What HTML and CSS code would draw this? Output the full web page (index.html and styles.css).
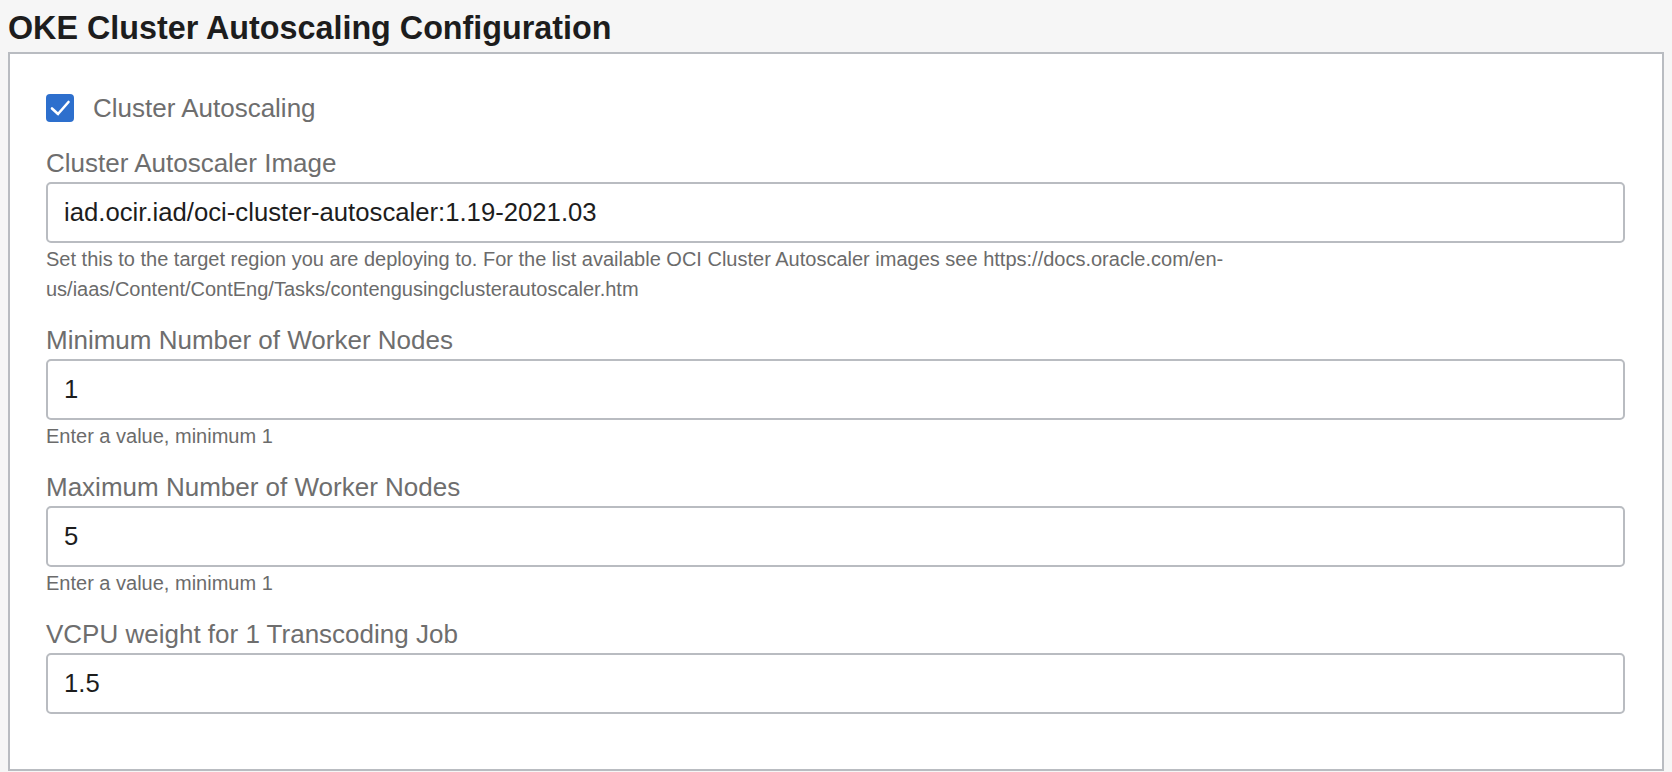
FILE: index.html
```html
<!DOCTYPE html>
<html>
<head>
    <meta charset="UTF-8">
    <title>OKE Cluster Autoscaling Configuration</title>
    <link rel="stylesheet" href="styles.css">
</head>
<body>
    <!-- Section title -->
    <h1 class="section-title">OKE Cluster Autoscaling Configuration</h1>

    <!-- Settings panel -->
    <div class="panel">
        <label class="check-row">
            <span class="check-box">
                <svg width="24" height="24" viewBox="0 0 24 24">
                    <path d="M4 12.5 L10 18 L20.5 6" fill="none" stroke="#fff" stroke-width="2.6" stroke-linecap="round" stroke-linejoin="round"/>
                </svg>
            </span>
            <span class="check-label">Cluster Autoscaling</span>
        </label>

        <div class="field">
            <label class="field-label" for="autoscaler-image">Cluster Autoscaler Image</label>
            <input class="field-input" type="text" id="autoscaler-image" value="iad.ocir.iad/oci-cluster-autoscaler:1.19-2021.03">
            <div class="field-help">Set this to the target region you are deploying to. For the list available OCI Cluster Autoscaler images see https://docs.oracle.com/en-us/iaas/Content/ContEng/Tasks/contengusingclusterautoscaler.htm</div>
        </div>

        <div class="field">
            <label class="field-label" for="min-nodes">Minimum Number of Worker Nodes</label>
            <input class="field-input" type="text" id="min-nodes" value="1">
            <div class="field-help">Enter a value, minimum 1</div>
        </div>

        <div class="field">
            <label class="field-label" for="max-nodes">Maximum Number of Worker Nodes</label>
            <input class="field-input" type="text" id="max-nodes" value="5">
            <div class="field-help">Enter a value, minimum 1</div>
        </div>

        <div class="field">
            <label class="field-label" for="vcpu-weight">VCPU weight for 1 Transcoding Job</label>
            <input class="field-input" type="text" id="vcpu-weight" value="1.5">
        </div>
    </div>
</body>
</html>
```

FILE: styles.css
```css
/* General Styling */
body {
    font-family: 'Liberation Sans', Arial, sans-serif;
    margin: 8px;
    background-color: #f6f6f6;
    color: #1d1d1d;
}

/* Section title */
.section-title {
    margin: 0 0 4px 0;
    font-size: 32.3px;
    line-height: 40px;
    font-weight: bold;
    color: #1d1d1d;
}

/* Panel */
.panel {
    background-color: #fff;
    border: 2px solid #b9bcc1;
    padding: 39px 37px 34px 36px;
}

/* Checkbox row */
.check-row {
    display: flex;
    align-items: center;
    gap: 19px;
    height: 30px;
    margin-bottom: 25px;
}

.check-box {
    width: 28px;
    height: 28px;
    border-radius: 4px;
    background-color: #2d6fcd;
    display: flex;
    align-items: center;
    justify-content: center;
}

.check-label {
    font-size: 26px;
    color: #6e6e6e;
}

/* Form fields */
.field {
    margin-bottom: 21px;
}

.field-label {
    display: block;
    font-size: 26px;
    line-height: 30px;
    color: #6e6e6e;
    margin-bottom: 4px;
}

.field-input {
    display: block;
    width: 100%;
    height: 61px;
    box-sizing: border-box;
    border: 2px solid #b9bcc1;
    border-radius: 5px;
    padding: 0 16px;
    font-size: 25.7px;
    font-family: 'Liberation Sans', Arial, sans-serif;
    color: #1d1d1d;
    background-color: #fff;
    outline: none;
}

.field-help {
    font-size: 20px;
    line-height: 30px;
    color: #6b6b6b;
    margin-top: 1px;
}
```
